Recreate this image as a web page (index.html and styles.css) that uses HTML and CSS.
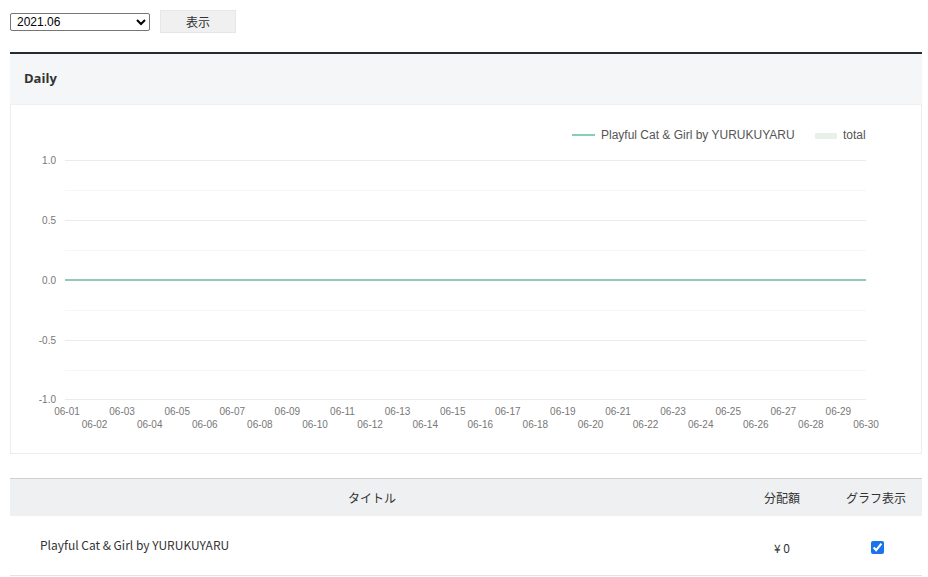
FILE: index.html
```html
<!DOCTYPE html>
<html lang="ja">
<head>
<meta charset="utf-8">
<title>Daily</title>
<link rel="stylesheet" href="styles.css">
</head>
<body>
<div class="controls">
  <select class="month">
    <option>2021.06</option>
  </select>
  <button class="show-btn" type="button">表示</button>
</div>

<section class="card">
  <div class="card-head">Daily</div>
  <div class="chart-box">
    <svg class="chart" width="910" height="348" viewBox="0 0 910 348" xmlns="http://www.w3.org/2000/svg">
      <!-- legend -->
      <line x1="561" y1="30" x2="584" y2="30" stroke="#86cfb4" stroke-width="2"/>
      <text x="590" y="34" class="legend">Playful Cat &amp; Girl by YURUKUYARU</text>
      <rect x="804" y="28" width="22" height="6" fill="#e9efe9"/>
      <text x="832" y="34" class="legend">total</text>
      <!-- minor grid -->
      <g stroke="#f6f6f6" stroke-width="1">
        <line x1="54" y1="85.5" x2="855" y2="85.5"/>
        <line x1="54" y1="145.5" x2="855" y2="145.5"/>
        <line x1="54" y1="205.5" x2="855" y2="205.5"/>
        <line x1="54" y1="265.5" x2="855" y2="265.5"/>
      </g>
      <!-- major grid -->
      <g stroke="#ebebeb" stroke-width="1">
        <line x1="54" y1="55.5" x2="855" y2="55.5"/>
        <line x1="54" y1="115.5" x2="855" y2="115.5"/>
        <line x1="54" y1="235.5" x2="855" y2="235.5"/>
        <line x1="54" y1="294.5" x2="855" y2="294.5"/>
      </g>
      <line x1="54" y1="175" x2="855" y2="175" stroke="#94c9b8" stroke-width="2"/>
      <!-- y labels -->
      <g class="axis" text-anchor="end">
        <text x="45" y="59">1.0</text>
        <text x="45" y="119">0.5</text>
        <text x="45" y="179">0.0</text>
        <text x="45" y="239">-0.5</text>
        <text x="45" y="298">-1.0</text>
      </g>
      <!-- x labels -->
      <g class="axis" text-anchor="middle">
        <text x="56" y="310">06-01</text>
        <text x="83.6" y="323">06-02</text>
        <text x="111.1" y="310">06-03</text>
        <text x="138.7" y="323">06-04</text>
        <text x="166.2" y="310">06-05</text>
        <text x="193.8" y="323">06-06</text>
        <text x="221.3" y="310">06-07</text>
        <text x="248.9" y="323">06-08</text>
        <text x="276.4" y="310">06-09</text>
        <text x="304" y="323">06-10</text>
        <text x="331.5" y="310">06-11</text>
        <text x="359.1" y="323">06-12</text>
        <text x="386.6" y="310">06-13</text>
        <text x="414.2" y="323">06-14</text>
        <text x="441.7" y="310">06-15</text>
        <text x="469.3" y="323">06-16</text>
        <text x="496.8" y="310">06-17</text>
        <text x="524.4" y="323">06-18</text>
        <text x="551.9" y="310">06-19</text>
        <text x="579.5" y="323">06-20</text>
        <text x="607" y="310">06-21</text>
        <text x="634.6" y="323">06-22</text>
        <text x="662.1" y="310">06-23</text>
        <text x="689.7" y="323">06-24</text>
        <text x="717.2" y="310">06-25</text>
        <text x="744.8" y="323">06-26</text>
        <text x="772.3" y="310">06-27</text>
        <text x="799.9" y="323">06-28</text>
        <text x="827.4" y="310">06-29</text>
        <text x="855" y="323">06-30</text>
      </g>
    </svg>
  </div>
</section>

<table class="titles">
  <colgroup>
    <col class="c-title">
    <col class="c-amount">
    <col class="c-graph">
  </colgroup>
  <thead>
    <tr>
      <th>タイトル</th>
      <th>分配額</th>
      <th>グラフ表示</th>
    </tr>
  </thead>
  <tbody>
    <tr>
      <td class="t-name">Playful Cat &amp; Girl by YURUKUYARU</td>
      <td class="t-amount">¥ 0</td>
      <td class="t-check"><input type="checkbox" checked></td>
    </tr>
  </tbody>
</table>
</body>
</html>
```
FILE: styles.css
```css
html, body {
  margin: 0;
  padding: 0;
  background: #fff;
}
body {
  padding: 10px 6px 0 10px;
  font-family: "Liberation Sans", Arial, "Noto Sans CJK JP", sans-serif;
  color: #333;
}
.controls {
  display: flex;
  align-items: center;
  gap: 10px;
  height: 23px;
}
.month {
  width: 140px;
  height: 18px;
  font-family: "Liberation Sans", Arial, sans-serif;
  font-size: 12px;
  color: #000;
  border: 1px solid #767676;
  border-radius: 2px;
  background: #fff;
  padding: 0 0 0 2px;
  margin: 0;
}
.show-btn {
  width: 76px;
  height: 23px;
  margin: 0;
  padding: 0;
  background: #f0f0f0;
  border: 1px solid #e6e6e6;
  border-radius: 0;
  font-family: "Noto Sans CJK JP", sans-serif;
  font-size: 12px;
  color: #333;
}
.card {
  margin-top: 19px;
  border-top: 2px solid #262b33;
}
.card-head {
  height: 50px;
  box-sizing: border-box;
  padding: 0 14px 2px;
  display: flex;
  align-items: center;
  background: #f5f6f8;
  font-family: "Open Sans", "Noto Sans", sans-serif;
  font-weight: 700;
  font-size: 13px;
  color: #333;
}
.chart-box {
  height: 350px;
  box-sizing: border-box;
  border: 1px solid #ececec;
  border-top: 1px solid #f0f0f0;
}
.chart {
  display: block;
}
.legend {
  font-family: "Liberation Sans", Arial, sans-serif;
  font-size: 12px;
  fill: #555;
}
.axis text {
  font-family: "Liberation Sans", Arial, sans-serif;
  font-size: 10px;
  fill: #777;
}
.titles {
  margin-top: 24px;
  width: 100%;
  border-collapse: collapse;
  table-layout: fixed;
  border-top: 1px solid #cfcfcf;
  font-family: "Noto Sans CJK JP", sans-serif;
  font-size: 12px;
  color: #333;
}
.c-title { width: auto; }
.c-amount { width: 96px; }
.c-graph { width: 92px; }
.titles th {
  height: 37px;
  padding: 0;
  background: #eff0f1;
  font-weight: 400;
  text-align: center;
}
.titles td {
  height: 56px;
  padding: 0;
  border-bottom: 1px solid #e3e3e3;
  text-align: center;
}
.titles td.t-name {
  text-align: left;
  padding-left: 30px;
  padding-bottom: 2px;
}
.titles td.t-amount {
  padding-top: 3px;
}
.t-check input {
  width: 13px;
  height: 13px;
  margin: 7px 0 0 2px;
  accent-color: #1a73e8;
}
```
